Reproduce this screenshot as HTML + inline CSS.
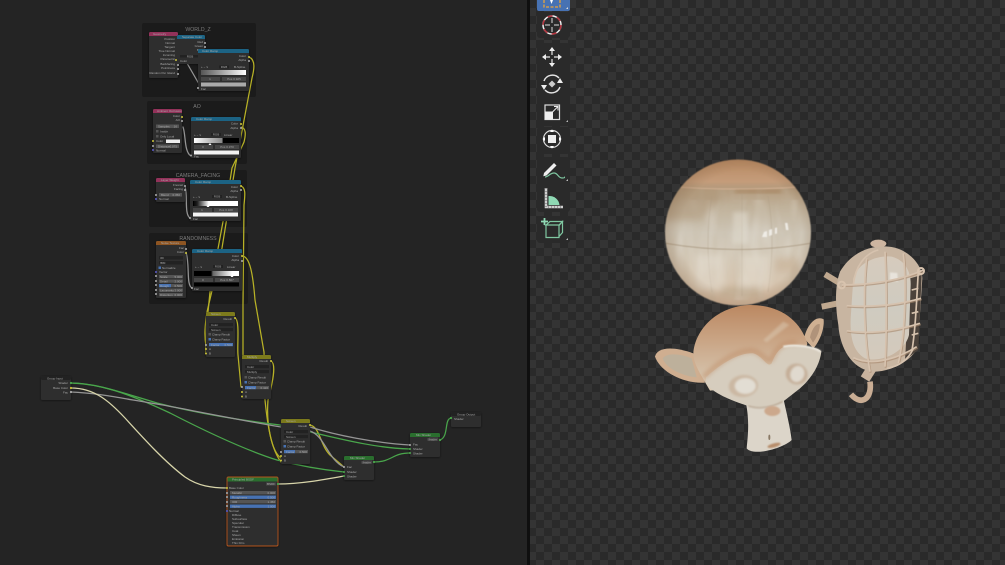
<!DOCTYPE html>
<html><head><meta charset="utf-8"><title>Shader Nodes</title>
<style>
html,body{margin:0;padding:0;background:#232323;width:1005px;height:565px;overflow:hidden}
svg{display:block}
text{font-family:"Liberation Sans",sans-serif}
.t{font-size:3px;fill:#a8a8a8}
.r{text-anchor:end}
.c{text-anchor:middle}
.f{font-size:5.200px;fill:#7c7c7c;text-anchor:middle}
.b{fill:#2f2f2f}
.w{fill:none;stroke-width:1.250;stroke-linecap:round}
.y{stroke:#b8b226}
.g{stroke:#4aa64c}
.a{stroke:#959595}
.m{stroke:#d8d5aa}
.ic{fill:none;stroke:#e4e4e4;stroke-width:1.500}
.cg{fill:none;stroke:#d6c2ae;stroke-width:5}
.cd{fill:none;stroke:#a98a70;stroke-width:6;opacity:.65}
</style></head><body>
<svg width="1005" height="565" viewBox="0 0 1005 565" xmlns="http://www.w3.org/2000/svg">
<defs>
<pattern id="chk" width="16" height="16" patternUnits="userSpaceOnUse"><rect width="16" height="16" fill="#343434"/><rect width="8" height="8" fill="#2a2a2a"/><rect x="8" y="8" width="8" height="8" fill="#2a2a2a"/></pattern>
<linearGradient id="ramp1"><stop offset="0" stop-color="#555"/><stop offset="1" stop-color="#fff"/></linearGradient>
<linearGradient id="ramp2"><stop offset="0" stop-color="#fff"/><stop offset=".62" stop-color="#888"/><stop offset=".65" stop-color="#000"/></linearGradient>
<linearGradient id="ramp3"><stop offset="0" stop-color="#000"/><stop offset=".1" stop-color="#222"/><stop offset=".35" stop-color="#fff"/><stop offset="1" stop-color="#fff"/></linearGradient>
<linearGradient id="ramp4"><stop offset=".38" stop-color="#000"/><stop offset=".42" stop-color="#666"/><stop offset=".85" stop-color="#fff"/></linearGradient>
<linearGradient id="sph" x1="0" y1="0" x2="0" y2="1"><stop offset="0" stop-color="#b98a63"/><stop offset=".15" stop-color="#c49c7a"/><stop offset=".2" stop-color="#b39a7c"/><stop offset=".32" stop-color="#c0b19a"/><stop offset=".5" stop-color="#cfc7b8"/><stop offset=".65" stop-color="#d4cab9"/><stop offset=".82" stop-color="#d6c6b1"/><stop offset="1" stop-color="#d4b99f"/></linearGradient>
<radialGradient id="sphE" cx=".52" cy=".5" r=".52"><stop offset=".8" stop-color="#7a5a3c" stop-opacity="0"/><stop offset="1" stop-color="#7a5a3c" stop-opacity=".28"/></radialGradient>
<linearGradient id="head" x1="0" y1="0" x2="0" y2="1"><stop offset="0" stop-color="#bb8861"/><stop offset=".4" stop-color="#c9a484"/><stop offset=".8" stop-color="#d4c0a8"/><stop offset="1" stop-color="#dacbb6"/></linearGradient>
<linearGradient id="glass" x1="0" y1="0" x2="0" y2="1"><stop offset="0" stop-color="#d6cbbd"/><stop offset=".5" stop-color="#cfcbc0"/><stop offset="1" stop-color="#d4cabc"/></linearGradient>
<filter id="s" x="-10%" y="-10%" width="120%" height="120%"><feGaussianBlur stdDeviation=".35"/></filter>
<filter id="nd" x="-15%" y="-15%" width="130%" height="130%"><feGaussianBlur stdDeviation=".3" result="b"/><feDropShadow dx="0" dy=".6" stdDeviation="1" flood-color="#000" flood-opacity=".55" in="b"/></filter>
<filter id="o" x="-5%" y="-5%" width="110%" height="110%"><feGaussianBlur stdDeviation=".5"/></filter>
<filter id="mb" x="-30%" y="-30%" width="160%" height="160%"><feGaussianBlur stdDeviation="2"/></filter>
<filter id="lb" x="-40%" y="-40%" width="180%" height="180%"><feGaussianBlur stdDeviation="3.500"/></filter>
<filter id="hb" x="-40%" y="-40%" width="180%" height="180%"><feGaussianBlur stdDeviation="7"/></filter>
<filter id="streak" x="0" y="0" width="100%" height="100%"><feTurbulence type="fractalNoise" baseFrequency=".09 .012" numOctaves="2" seed="4"/><feColorMatrix type="matrix" values="0 0 0 0 .55  0 0 0 0 .47  0 0 0 0 .35  2.200 0 0 0 -1"/></filter>
<filter id="streakw" x="0" y="0" width="100%" height="100%"><feTurbulence type="fractalNoise" baseFrequency=".06 .02" numOctaves="2" seed="11"/><feColorMatrix type="matrix" values="0 0 0 0 .93  0 0 0 0 .91  0 0 0 0 .87  2.200 0 0 0 -1"/></filter>
<clipPath id="sc"><circle cx="738" cy="232.500" r="73"/></clipPath>
</defs>

<rect width="528" height="565" fill="#242424"/>

<!-- Frames -->
<rect x="142" y="23" width="114" height="74" rx="2" fill="#1b1b1b"/>
<rect x="147" y="101" width="100" height="63" rx="2" fill="#1b1b1b"/>
<rect x="149" y="170" width="98" height="57" rx="2" fill="#1b1b1b"/>
<rect x="149" y="233" width="99" height="71" rx="2" fill="#1b1b1b"/>
<text x="198" y="31" class="f">WORLD_Z</text>
<text x="197" y="108" class="f">AO</text>
<text x="198" y="177" class="f">CAMERA_FACING</text>
<text x="198" y="240" class="f">RANDOMNESS</text>

<!-- Wires -->
<g class="w" filter="url(#s)">
<path class="y" d="M249 57C256 60 254 70 252 78L235 168L222 248L207 312C205 325 204 335 206 346"/>
<path class="y" d="M241 127C246 128 246 134 244 142L232 168L227 200L210 292L208 312C206 325 206 340 206 352"/>
<path class="y" d="M241 186C246 188 245 195 244 205L243 305L243 385"/>
<path class="y" d="M242 256C250 256 253 275 255 300L264 352L265 400C268 430 272 450 281 462"/>
<path class="y" d="M235 318C240 320 237 345 238 355L241 387"/>
<path class="y" d="M271 361C277 364 272 385 268 400C266 425 272 452 281 458"/>
<path class="y" d="M310 425C320 427 320 445 330 455L344 467"/>
<path class="g" d="M71 383C95 383 120 392 157 403C200 414 240 420 280 425C330 436 370 448 410 449"/>
<path class="g" d="M71 383C100 384 125 392 170 413C205 431 245 450 277 460C300 466 325 470 344 472"/>
<path class="a" d="M71 392C100 393 130 400 163 405C205 413 245 421 281 427"/>
<path class="a" d="M310 427C335 435 375 443 410 445"/>
<path class="a" d="M310 431C325 436 328 460 344 467"/>
<path class="m" d="M71 388C95 388 110 402 125 418C145 440 165 462 185 477C198 486 212 488 227 488"/>
<path class="m" d="M278 484C300 484 322 480 344 476"/>
<path class="g" d="M374 462C392 462 392 453 410 453"/>
<path class="g" d="M440 440C449 437 444 419 451 418"/>
<path class="a" d="M176 44L199 84"/>
<path class="a" d="M183 127C186 135 184 152 191 156"/>
<path class="a" d="M185 187C188 195 184 214 190 218"/>
<path class="a" d="M186 252C190 265 186 285 192 288"/>
</g>

<g filter="url(#nd)">
<!-- Geometry -->
<rect x="149" y="32" width="29" height="46" rx="1.500" class="b"/><path d="M149 36V33.500a1.500 1.500 0 0 1 1.500-1.500h26a1.500 1.500 0 0 1 1.500 1.500V36z" fill="#93305a"/>
<text x="153" y="35" class="t">Geometry</text>
<text x="175" y="40" class="t r">Position</text><text x="175" y="44" class="t r">Normal</text><text x="175" y="48" class="t r">Tangent</text><text x="175" y="52" class="t r">True Normal</text><text x="175" y="56" class="t r">Incoming</text><text x="175" y="60" class="t r">Parametric</text><text x="175" y="65" class="t r">Backfacing</text><text x="175" y="69" class="t r">Pointiness</text><text x="175" y="74" class="t r">Random Per Island</text>
<circle cx="176" cy="60" r="1" fill="#c9c23a"/><circle cx="178" cy="65" r="1" fill="#aaa"/><circle cx="178" cy="69" r="1" fill="#aaa"/><circle cx="178" cy="74" r="1" fill="#aaa"/>
<!-- Separate -->
<rect x="177" y="35" width="28" height="29" rx="1.500" class="b"/><path d="M177 39V36.500a1.500 1.500 0 0 1 1.500-1.500h25a1.500 1.500 0 0 1 1.500 1.500V39z" fill="#1c6484"/>
<text x="182" y="38" class="t">Separate Color</text>
<text x="203" y="43" class="t r">Red</text><text x="203" y="47" class="t r">Green</text><text x="203" y="51" class="t r">Blue</text>
<rect x="180" y="55" width="20" height="2.500" fill="#222"/><text x="190" y="57.500" class="t c">RGB</text><text x="180" y="62" class="t">Color</text>
<circle cx="205" cy="43" r="1" fill="#aaa"/><circle cx="205" cy="47" r="1" fill="#aaa"/><circle cx="205" cy="51" r="1" fill="#aaa"/>
<!-- Ramp world -->
<rect x="198" y="49" width="51" height="42" rx="1.500" class="b"/><path d="M198 53V50.500a1.500 1.500 0 0 1 1.500-1.500h48a1.500 1.500 0 0 1 1.500 1.500V53z" fill="#1c6484"/>
<text x="202" y="52" class="t">Color Ramp</text>
<text x="246" y="57" class="t r">Color</text><text x="246" y="61" class="t r">Alpha</text>
<text x="201" y="68" class="t">+  −  ∨</text><rect x="219" y="65.500" width="10" height="3" fill="#222"/><text x="224" y="68" class="t c">RGB</text><text x="234" y="68" class="t">B-Spline</text>
<rect x="201" y="70" width="45" height="5" fill="url(#ramp1)"/>
<rect x="201" y="77" width="19" height="4" fill="#444"/><rect x="222" y="77" width="24" height="4" fill="#444"/><text x="210" y="80" class="t c">1</text><text x="234" y="80" class="t c">Pos  0.925</text>
<rect x="201" y="82.500" width="45" height="4" fill="#aaa"/><text x="201" y="90" class="t">Fac</text>
<circle cx="249" cy="57" r="1" fill="#c9c23a"/><circle cx="249" cy="61" r="1" fill="#aaa"/><circle cx="198" cy="88" r="1" fill="#aaa"/>
<!-- AO -->
<rect x="153" y="109" width="29" height="44" rx="1.500" class="b"/><path d="M153 113V110.500a1.500 1.500 0 0 1 1.500-1.500h26a1.500 1.500 0 0 1 1.500 1.500V113z" fill="#93305a"/>
<text x="157" y="112" class="t">Ambient Occlusion</text>
<text x="180" y="117" class="t r">Color</text><text x="180" y="121" class="t r">AO</text>
<rect x="156" y="124.500" width="23" height="3.500" fill="#555"/><text x="158" y="127.500" class="t">Samples</text><text x="177" y="127.500" class="t r">16</text>
<rect x="156" y="130" width="2.500" height="2.500" fill="#555"/><text x="160" y="132.500" class="t">Inside</text>
<rect x="156" y="135" width="2.500" height="2.500" fill="#555"/><text x="160" y="137.500" class="t">Only Local</text>
<text x="156" y="142" class="t">Color</text><rect x="166" y="139.500" width="14" height="3.500" fill="#eee"/>
<rect x="156" y="144.500" width="23" height="3.500" fill="#555"/><text x="158" y="147.500" class="t">Distance</text><text x="177" y="147.500" class="t r">0.075</text><text x="156" y="151.500" class="t">Normal</text>
<circle cx="182" cy="117" r="1" fill="#c9c23a"/><circle cx="182" cy="121" r="1" fill="#aaa"/><circle cx="153" cy="141" r="1" fill="#c9c23a"/><circle cx="153" cy="146" r="1" fill="#aaa"/><circle cx="153" cy="150" r="1" fill="#5a5ac8"/>
<!-- Ramp AO -->
<rect x="191" y="117" width="50" height="41" rx="1.500" class="b"/><path d="M191 121V118.500a1.500 1.500 0 0 1 1.500-1.500h47a1.500 1.500 0 0 1 1.500 1.500V121z" fill="#1c6484"/>
<text x="196" y="120" class="t">Color Ramp</text>
<text x="238" y="124.500" class="t r">Color</text><text x="238" y="129" class="t r">Alpha</text>
<text x="194" y="136" class="t">+  −  ∨</text><rect x="211" y="133" width="10" height="3" fill="#222"/><text x="216" y="135.500" class="t c">RGB</text><text x="224" y="136" class="t">Linear</text>
<rect x="194" y="138" width="45" height="5" fill="url(#ramp2)"/><path d="M210 143l1.500 2h-3z" fill="#fff"/>
<rect x="194" y="145" width="19" height="4" fill="#444"/><rect x="215" y="145" width="24" height="4" fill="#444"/><text x="203" y="148" class="t c">0</text><text x="227" y="148" class="t c">Pos  0.370</text>
<rect x="194" y="150.500" width="45" height="4" fill="#f2f2f2"/><text x="194" y="157.500" class="t">Fac</text>
<circle cx="241" cy="124" r="1" fill="#c9c23a"/><circle cx="241" cy="128" r="1" fill="#aaa"/><circle cx="191" cy="155.500" r="1" fill="#aaa"/>
<!-- Layer Weight -->
<rect x="156" y="178" width="29" height="24" rx="1.500" class="b"/><path d="M156 182V179.500a1.500 1.500 0 0 1 1.500-1.500h26a1.500 1.500 0 0 1 1.500 1.500V182z" fill="#93305a"/>
<text x="161" y="181" class="t">Layer Weight</text><text x="183" y="186" class="t r">Fresnel</text><text x="183" y="190" class="t r">Facing</text>
<rect x="159" y="193" width="23" height="3.500" fill="#555"/><text x="161" y="196" class="t">Blend</text><text x="180" y="196" class="t r">0.350</text><text x="159" y="200" class="t">Normal</text>
<circle cx="185" cy="186" r="1" fill="#aaa"/><circle cx="185" cy="190" r="1" fill="#aaa"/><circle cx="156" cy="195" r="1" fill="#aaa"/><circle cx="156" cy="199" r="1" fill="#5a5ac8"/>
<!-- Ramp cam -->
<rect x="190" y="180" width="51" height="41" rx="1.500" class="b"/><path d="M190 184V181.500a1.500 1.500 0 0 1 1.500-1.500h48a1.500 1.500 0 0 1 1.500 1.500V184z" fill="#1c6484"/>
<text x="195" y="183" class="t">Color Ramp</text><text x="238" y="188" class="t r">Color</text><text x="238" y="192" class="t r">Alpha</text>
<text x="193" y="198" class="t">+  −  ∨</text><rect x="212" y="195" width="10" height="3" fill="#222"/><text x="217" y="197.500" class="t c">RGB</text><text x="226" y="198" class="t">B-Spline</text>
<rect x="193" y="201" width="45" height="5" fill="url(#ramp3)"/><path d="M208 205l1.500 2h-3z" fill="#fff"/>
<rect x="193" y="208" width="19" height="4" fill="#444"/><rect x="214" y="208" width="24" height="4" fill="#444"/><text x="202" y="211" class="t c">1</text><text x="226" y="211" class="t c">Pos  0.328</text>
<rect x="193" y="212.500" width="45" height="4" fill="#f4f4f4"/><text x="193" y="220" class="t">Fac</text>
<circle cx="241" cy="186" r="1" fill="#c9c23a"/><circle cx="241" cy="190" r="1" fill="#aaa"/><circle cx="190" cy="218" r="1" fill="#aaa"/>
<!-- Noise -->
<rect x="156" y="241" width="30" height="57" rx="1.500" class="b"/><path d="M156 245V242.500a1.500 1.500 0 0 1 1.500-1.500h27a1.500 1.500 0 0 1 1.500 1.500V245z" fill="#8e5422"/>
<text x="161" y="244" class="t">Noise Texture</text><text x="184" y="249" class="t r">Fac</text><text x="184" y="253" class="t r">Color</text>
<rect x="159" y="256" width="24" height="3.500" fill="#222"/><text x="160" y="259" class="t">3D</text><rect x="159" y="261" width="24" height="3.500" fill="#222"/><text x="160" y="264" class="t">fBM</text>
<rect x="158.500" y="266.500" width="2.500" height="2.500" fill="#4772b3"/><text x="162" y="269" class="t">Normalize</text><text x="159" y="273" class="t">Vector</text>
<rect x="159" y="275" width="24" height="3.200" fill="#555"/><text x="160" y="278" class="t">Scale</text><text x="182" y="278" class="t r">5.000</text>
<rect x="159" y="279.500" width="24" height="3.200" fill="#555"/><text x="160" y="282.500" class="t">Detail</text><text x="182" y="282.500" class="t r">2.000</text>
<rect x="159" y="284" width="24" height="3.200" fill="#555"/><rect x="159" y="284" width="12" height="3.200" fill="#4772b3"/><text x="160" y="287" class="t">Rough</text><text x="182" y="287" class="t r">0.500</text>
<rect x="159" y="288.500" width="24" height="3.200" fill="#555"/><text x="160" y="291.500" class="t">Lacunarity</text><text x="182" y="291.500" class="t r">2.000</text>
<rect x="159" y="293" width="24" height="3.200" fill="#555"/><text x="160" y="296" class="t">Distortion</text><text x="182" y="296" class="t r">0.000</text>
<circle cx="186" cy="249" r="1" fill="#aaa"/><circle cx="186" cy="253" r="1" fill="#c9c23a"/><circle cx="156" cy="272" r="1" fill="#5a5ac8"/><circle cx="156" cy="276" r="1" fill="#aaa"/><circle cx="156" cy="281" r="1" fill="#aaa"/><circle cx="156" cy="285" r="1" fill="#aaa"/><circle cx="156" cy="290" r="1" fill="#aaa"/><circle cx="156" cy="294" r="1" fill="#aaa"/>
<!-- Ramp rand -->
<rect x="192" y="249" width="50" height="42" rx="1.500" class="b"/><path d="M192 253V250.500a1.500 1.500 0 0 1 1.500-1.500h47a1.500 1.500 0 0 1 1.500 1.500V253z" fill="#1c6484"/>
<text x="197" y="252" class="t">Color Ramp</text><text x="239" y="257" class="t r">Color</text><text x="239" y="261" class="t r">Alpha</text>
<text x="195" y="268" class="t">+  −  ∨</text><rect x="213" y="265" width="10" height="3" fill="#222"/><text x="218" y="267.500" class="t c">RGB</text><text x="227" y="268" class="t">Linear</text>
<rect x="194" y="271" width="45" height="5" fill="url(#ramp4)"/><path d="M232 275l1.500 2h-3z" fill="#fff"/>
<rect x="194" y="278" width="19" height="4" fill="#444"/><rect x="215" y="278" width="24" height="4" fill="#444"/><text x="203" y="281" class="t c">0</text><text x="227" y="281" class="t c">Pos  0.867</text>
<rect x="194" y="282.500" width="45" height="4" fill="#050505"/><text x="194" y="290" class="t">Fac</text>
<circle cx="242" cy="256" r="1" fill="#c9c23a"/><circle cx="242" cy="261" r="1" fill="#aaa"/><circle cx="192" cy="288" r="1" fill="#aaa"/>
<!-- Screen 1 -->
<rect x="206" y="312" width="29" height="45" rx="1.500" class="b"/><path d="M206 316V313.500a1.500 1.500 0 0 1 1.500-1.500h26a1.500 1.500 0 0 1 1.500 1.500V316z" fill="#7c7a1c"/>
<text x="211" y="315" class="t">Screen</text><text x="232" y="320" class="t r">Result</text>
<rect x="209" y="323" width="24" height="3.200" fill="#222"/><text x="211" y="326" class="t">Color</text><rect x="209" y="328" width="24" height="3.200" fill="#222"/><text x="211" y="331" class="t">Screen</text>
<rect x="208.500" y="333" width="2.500" height="2.500" fill="#555"/><text x="212" y="335.500" class="t">Clamp Result</text><rect x="208.500" y="338" width="2.500" height="2.500" fill="#4772b3"/><text x="212" y="340.500" class="t">Clamp Factor</text>
<rect x="209" y="343" width="24" height="3.200" fill="#4772b3"/><text x="211" y="346" class="t">Factor</text><text x="232" y="346" class="t r">0.500</text>
<text x="209" y="350" class="t">A</text><text x="209" y="354.500" class="t">B</text>
<circle cx="235" cy="318" r="1" fill="#c9c23a"/><circle cx="206" cy="345" r="1" fill="#aaa"/><circle cx="206" cy="349" r="1" fill="#c9c23a"/><circle cx="206" cy="353.500" r="1" fill="#c9c23a"/>
<!-- Multiply -->
<rect x="242" y="355" width="29" height="44" rx="1.500" class="b"/><path d="M242 359V356.500a1.500 1.500 0 0 1 1.500-1.500h26a1.500 1.500 0 0 1 1.500 1.500V359z" fill="#7c7a1c"/>
<text x="247" y="358" class="t">Multiply</text><text x="268" y="362" class="t r">Result</text>
<rect x="245" y="365" width="24" height="3.200" fill="#222"/><text x="247" y="368" class="t">Color</text><rect x="245" y="370" width="24" height="3.200" fill="#222"/><text x="247" y="373" class="t">Multiply</text>
<rect x="244.500" y="376" width="2.500" height="2.500" fill="#555"/><text x="248" y="378.500" class="t">Clamp Result</text><rect x="244.500" y="381" width="2.500" height="2.500" fill="#4772b3"/><text x="248" y="383.500" class="t">Clamp Factor</text>
<rect x="245" y="386" width="24" height="3.200" fill="#555"/><rect x="245" y="386" width="11" height="3.200" fill="#4772b3"/><text x="247" y="389" class="t">Factor</text><text x="268" y="389" class="t r">0.420</text>
<text x="245" y="393" class="t">A</text><text x="245" y="397.500" class="t">B</text>
<circle cx="271" cy="361" r="1" fill="#c9c23a"/><circle cx="242" cy="387" r="1" fill="#aaa"/><circle cx="242" cy="392" r="1" fill="#c9c23a"/><circle cx="242" cy="396.500" r="1" fill="#c9c23a"/>
<!-- Screen 2 -->
<rect x="281" y="419" width="29" height="45" rx="1.500" class="b"/><path d="M281 423V420.500a1.500 1.500 0 0 1 1.500-1.500h26a1.500 1.500 0 0 1 1.500 1.500V423z" fill="#7c7a1c"/>
<text x="286" y="422" class="t">Screen</text><text x="307" y="427" class="t r">Result</text>
<rect x="284" y="430" width="24" height="3.200" fill="#222"/><text x="286" y="433" class="t">Color</text><rect x="284" y="435" width="24" height="3.200" fill="#222"/><text x="286" y="438" class="t">Screen</text>
<rect x="283.500" y="440" width="2.500" height="2.500" fill="#555"/><text x="287" y="442.500" class="t">Clamp Result</text><rect x="283.500" y="445" width="2.500" height="2.500" fill="#4772b3"/><text x="287" y="447.500" class="t">Clamp Factor</text>
<rect x="284" y="450" width="24" height="3.200" fill="#555"/><rect x="284" y="450" width="11" height="3.200" fill="#4772b3"/><text x="286" y="453" class="t">Factor</text><text x="307" y="453" class="t r">0.500</text>
<text x="284" y="457" class="t">A</text><text x="284" y="461.500" class="t">B</text>
<circle cx="310" cy="425" r="1" fill="#c9c23a"/><circle cx="281" cy="452" r="1" fill="#aaa"/><circle cx="281" cy="456" r="1" fill="#c9c23a"/><circle cx="281" cy="460.500" r="1" fill="#c9c23a"/>
<!-- Group input -->
<rect x="41" y="376" width="30" height="24" rx="1.500" class="b"/><rect x="41" y="376" width="30" height="4" rx="1.500" fill="#202020"/>
<text x="47" y="379.500" class="t">Group Input</text><text x="68" y="384" class="t r">Shader</text><text x="68" y="389" class="t r">Base Color</text><text x="68" y="393.500" class="t r">Fac</text>
<circle cx="71" cy="383" r="1.100" fill="#4aa64c"/><circle cx="71" cy="388" r="1.100" fill="#c9c23a"/><circle cx="71" cy="392" r="1.100" fill="#aaa"/>
<!-- Principled -->
<rect x="227" y="477" width="51" height="69" rx="1.500" fill="#2f2f2f" stroke="#b5541c" stroke-width=".9"/><rect x="227.500" y="477.500" width="50" height="4" fill="#2b6e2f"/>
<text x="232" y="480.500" class="t">Principled BSDF</text>
<rect x="266" y="482.500" width="10" height="3" fill="#444"/><text x="275" y="485" class="t r">BSDF</text><text x="229" y="489" class="t">Base Color</text>
<rect x="230" y="491" width="46" height="3.400" fill="#555"/><text x="232" y="494" class="t">Metallic</text><text x="275" y="494" class="t r">0.000</text>
<rect x="230" y="495.500" width="46" height="3.400" fill="#4772b3"/><text x="232" y="498.500" class="t">Roughness</text><text x="275" y="498.500" class="t r">0.500</text>
<rect x="230" y="500" width="46" height="3.400" fill="#555"/><text x="232" y="503" class="t">IOR</text><text x="275" y="503" class="t r">1.450</text>
<rect x="230" y="504.500" width="46" height="3.400" fill="#4772b3"/><text x="232" y="507.500" class="t">Alpha</text><text x="275" y="507.500" class="t r">1.000</text>
<text x="229" y="512" class="t">Normal</text>
<text x="232" y="516" class="t">Diffuse</text><text x="232" y="520" class="t">Subsurface</text><text x="232" y="524" class="t">Specular</text><text x="232" y="528" class="t">Transmission</text><text x="232" y="532" class="t">Coat</text><text x="232" y="536" class="t">Sheen</text><text x="232" y="540" class="t">Emission</text><text x="232" y="544" class="t">Thin Film</text>
<circle cx="278" cy="484" r="1.100" fill="#4aa64c"/><circle cx="227" cy="488" r="1" fill="#c9c23a"/><circle cx="227" cy="493" r="1" fill="#aaa"/><circle cx="227" cy="497" r="1" fill="#aaa"/><circle cx="227" cy="502" r="1" fill="#aaa"/><circle cx="227" cy="506" r="1" fill="#aaa"/><circle cx="227" cy="511" r="1" fill="#5a5ac8"/>
<!-- Mix Shader 1 -->
<rect x="344" y="456" width="30" height="24" rx="1.500" class="b"/><path d="M344 460V457.500a1.500 1.500 0 0 1 1.500-1.500h27a1.500 1.500 0 0 1 1.500 1.500V460z" fill="#2b6e2f"/>
<text x="350" y="459" class="t">Mix Shader</text><rect x="363" y="460.500" width="9" height="3.400" fill="#444"/><text x="371" y="463.500" class="t r">Shader</text><text x="347" y="468" class="t">Fac</text><text x="347" y="473" class="t">Shader</text><text x="347" y="477.500" class="t">Shader</text>
<circle cx="374" cy="462" r="1.100" fill="#4aa64c"/><circle cx="344" cy="467" r="1" fill="#aaa"/><circle cx="344" cy="472" r="1" fill="#4aa64c"/><circle cx="344" cy="476" r="1" fill="#4aa64c"/>
<!-- Mix Shader 2 -->
<rect x="410" y="433" width="30" height="24" rx="1.500" class="b"/><path d="M410 437V434.500a1.500 1.500 0 0 1 1.500-1.500h27a1.500 1.500 0 0 1 1.500 1.500V437z" fill="#2b6e2f"/>
<text x="416" y="436" class="t">Mix Shader</text><rect x="429" y="437.500" width="9" height="3.400" fill="#444"/><text x="437" y="440.500" class="t r">Shader</text><text x="413" y="445.500" class="t">Fac</text><text x="413" y="450" class="t">Shader</text><text x="413" y="454.500" class="t">Shader</text>
<circle cx="440" cy="440" r="1.100" fill="#4aa64c"/><circle cx="410" cy="445" r="1" fill="#aaa"/><circle cx="410" cy="449" r="1" fill="#4aa64c"/><circle cx="410" cy="453" r="1" fill="#4aa64c"/>
<!-- Group output -->
<rect x="451" y="412" width="30" height="15" rx="1.500" class="b"/><rect x="451" y="412" width="30" height="4" rx="1.500" fill="#202020"/>
<text x="457" y="415.500" class="t">Group Output</text><text x="454" y="420" class="t">Shader</text><circle cx="451" cy="418" r="1.100" fill="#4aa64c"/>
</g>

<!-- Divider + viewport -->
<rect x="527" y="0" width="3" height="565" fill="#0f0f0f"/>
<rect x="530" y="0" width="475" height="565" fill="url(#chk)"/>

<!-- Toolbar -->
<g filter="url(#s)">
<rect x="537" y="-4" width="33" height="15" rx="2" fill="#4772b3"/>
<path d="M544 0v7h16V0" fill="none" stroke="#e8a33a" stroke-width="1.300" stroke-dasharray="3 1.500"/><path d="M550 0h3l-1.500 4z" fill="#fff"/><path d="M566 9h2V7z" fill="#ddd"/>
<rect x="537" y="12" width="33" height="26" rx="3" fill="#2a2a2a"/>
<rect x="537" y="43" width="33" height="83" rx="3" fill="#2a2a2a"/>
<rect x="537" y="127" width="33" height="27" rx="3" fill="#2a2a2a"/>
<rect x="537" y="157" width="33" height="55" rx="3" fill="#2a2a2a"/>
<rect x="537" y="216" width="33" height="27" rx="3" fill="#2a2a2a"/>
<circle cx="552" cy="25" r="9" fill="none" stroke="#eee" stroke-width="1.500"/>
<circle cx="552" cy="25" r="9" fill="none" stroke="#b5303c" stroke-width="1.500" stroke-dasharray="5 4.420"/>
<path d="M552 18v5M552 27v5M545 25h5M554 25h5" stroke="#ddd" stroke-width="1" fill="none"/>
<path d="M552 51v4M552 59v4M546 57h4M554 57h4" stroke="#e8e8e8" stroke-width="1.200"/>
<path d="M552 47l3 4h-6zM552 67l3-4h-6zM542 57l4-3v6zM562 57l-4-3v6z" fill="#eee"/>
<path d="M544 81a9 9 0 0 1 15-3M560 87a9 9 0 0 1-15 3" class="ic"/>
<path d="M560 78l3 5h-6zM544 90l-3-5h6z" fill="#eee"/>
<rect x="549.500" y="81.500" width="5" height="5" transform="rotate(45 552 84)" fill="#ccc"/>
<rect x="545" y="105" width="14.500" height="14.500" fill="none" stroke="#ddd" stroke-width="1.200"/>
<rect x="545" y="111.500" width="8" height="8" fill="#eee"/>
<path d="M552.500 112l5-5M554 106.500h4v4" fill="none" stroke="#eee" stroke-width="1"/>
<path d="M566 122h2v-2z" fill="#bbb"/>
<circle cx="552" cy="139" r="8.500" fill="none" stroke="#ddd" stroke-width="1.200"/>
<rect x="548" y="135" width="8" height="8" fill="#eee"/>
<path d="M552 129.500l2 2.500h-4zM552 148.500l2-2.500h-4zM542.500 139l2.500-2v4zM561.500 139l-2.500-2v4z" fill="#fff"/>
<path d="M544 173l10-10 2.500 2.500-10 10-3.200.8z" fill="#eee"/>
<path d="M545 177c3 0 5-4 9-4s4 5 8 5 2-1 3-1" fill="none" stroke="#7fc7a1" stroke-width="1.200"/>
<path d="M566 181h2v-2z" fill="#bbb"/>
<path d="M546 188v19h17" fill="none" stroke="#cfcfcf" stroke-width="2.600"/>
<path d="M548.500 196a10 10 0 0 1 11 9h-11z" fill="#8fd9b4"/>
<path d="M546 188v19h17" fill="none" stroke="#777" stroke-width="2.600" stroke-dasharray=".6 2.400"/>
<path d="M546 225l4-3.500h12.500l-3 3.500zM546 225h13v12.500h-13zM559 225l3.500-3.500v11l-3.500 4" fill="none" stroke="#7fc7a1" stroke-width="1.200"/>
<path d="M544.500 218v7M541 221.500h7" stroke="#8fd9b4" stroke-width="1.800"/>
<path d="M566 240h2v-2z" fill="#bbb"/>
</g>

<!-- Sphere -->
<g filter="url(#o)">
<circle cx="738" cy="232.500" r="73" fill="url(#sph)"/>
<g clip-path="url(#sc)">
<rect x="665" y="188" width="146" height="118" filter="url(#streak)" opacity=".38"/>
<rect x="665" y="200" width="146" height="100" filter="url(#streakw)" opacity=".32"/>
<path d="M664 186Q738 192 812 186" fill="none" stroke="#d4b295" stroke-width="1"/>
<path d="M735 190h46v3h-46z" fill="#a27d55" opacity=".75" filter="url(#mb)"/>
<path d="M664 243Q738 256 812 243" fill="none" stroke="#a8977f" stroke-width=".8"/>
<path d="M664 190Q700 188 725 195L700 220L664 220z" fill="#a88f70" opacity=".4" filter="url(#lb)"/>
<path d="M712 196Q704 240 712 292M742 194V296M768 196Q776 240 768 292" fill="none" stroke="#a8977f" stroke-width=".6" opacity=".5"/>
<rect x="733" y="212" width="15" height="32" fill="#e6e2d8" opacity=".45" filter="url(#mb)"/>
<g filter="url(#lb)" opacity=".45">
<rect x="695" y="255" width="30" height="35" fill="#e7e1d6"/>
<rect x="740" y="255" width="30" height="32" fill="#e9e3d8"/>
<rect x="720" y="287" width="40" height="10" fill="#ae9b7e"/>
<rect x="775" y="258" width="22" height="14" fill="#c4a98c"/>
</g>
<path d="M762 237l2-5 3-1 0 6zM769 236v-6l3-1v6zM775 234v-6l2-.5v6zM785 223l2.500 0 1 7-2.500 0z" fill="#f3f1ec" opacity=".85"/>
</g>
<circle cx="738" cy="232.500" r="73" fill="url(#sphE)"/>
</g>

<!-- Monkey -->
<g transform="translate(650 300) scale(.33333)" filter="url(#o)">
<path d="M15 170C20 145 60 135 130 160L165 248C100 252 30 215 15 170Z" fill="#cfae90"/>
<path d="M38 175C50 158 90 160 125 175L140 232C100 228 50 208 38 175Z" fill="#bdb09b"/>
<path d="M462 115C472 70 500 45 521 58C524 90 506 128 490 145Z" fill="#cfb092"/>
<path d="M480 112C485 88 497 70 509 72C511 92 498 116 489 128Z" fill="#b0937a"/>
<path d="M130 160C135 90 200 18 300 15C390 15 450 60 472 130L440 250L180 272C150 220 130 190 130 160Z" fill="url(#head)"/>
<path d="M340 120l60-55 18 10-68 52z" fill="#dac9b2" opacity=".5" filter="url(#lb)"/>
<path d="M288 310C300 370 292 420 290 445C310 470 400 445 425 420C420 380 410 340 400 295Z" fill="#dcd5c9"/>
<path d="M168 232C220 185 270 158 310 160C340 168 350 205 365 190C380 150 400 130 440 135C480 140 510 145 514 155C510 190 490 230 450 265C425 285 405 300 395 308C360 322 320 325 295 318C240 300 190 280 168 250Z" fill="#d6cdbe"/>
<path d="M160 232C215 178 270 148 310 152C340 160 350 190 365 178C380 142 400 124 440 128" fill="none" stroke="#bf8d67" stroke-width="12" opacity=".65" filter="url(#hb)"/>
<path d="M400 140C440 132 490 140 512 155" fill="none" stroke="#ece7dd" stroke-width="6" filter="url(#mb)"/>
<path d="M295 318C330 330 370 320 398 305" fill="none" stroke="#a8927c" stroke-width="5" opacity=".55" filter="url(#mb)"/>
<ellipse cx="280" cy="258" rx="44" ry="33" fill="#cbb8a3" transform="rotate(-5 280 258)" filter="url(#lb)"/>
<ellipse cx="286" cy="258" rx="32" ry="24" fill="#e2ddd3" filter="url(#lb)"/>
<ellipse cx="440" cy="222" rx="33" ry="31" fill="#c4ae98" transform="rotate(20 440 222)" filter="url(#lb)"/>
<ellipse cx="442" cy="222" rx="21" ry="25" fill="#e0d9ce" transform="rotate(20 442 222)" filter="url(#lb)"/>
<ellipse cx="367" cy="333" rx="24" ry="15" fill="#cca88c" filter="url(#mb)"/>
<ellipse cx="372" cy="436" rx="20" ry="6" fill="#b78d6b" transform="rotate(-15 372 436)" filter="url(#mb)"/>
<ellipse cx="358" cy="412" rx="3" ry="8" fill="#8a7a66"/>
</g>

<!-- Lamp -->
<g transform="translate(815 235) scale(.33333)" filter="url(#o)">
<path d="M30 118L75 145M20 215L70 205" stroke="#bfa88f" stroke-width="18" fill="none"/>
<path d="M170 400L150 432" stroke="#c9b39e" stroke-width="30"/>
<path d="M165 440C172 490 140 515 108 478" fill="none" stroke="#c9ad94" stroke-width="17"/>
<ellipse cx="190" cy="26" rx="24" ry="12" fill="#cdb5a0"/>
<path d="M75 110C110 50 170 30 220 35C280 40 322 90 322 130L308 340C280 385 220 412 170 410C110 400 75 340 70 270C60 210 60 150 75 110Z" fill="#c8b5a1"/>
<path d="M285 130L320 120L310 345L270 375Z" fill="#4c433b"/>
<path d="M115 130C130 80 190 60 230 65C270 75 288 110 287 150L282 300C270 350 200 385 150 370C115 350 105 310 107 250Z" fill="url(#glass)"/>
<path d="M225 112l22 2 2 26-25-2z" fill="#efece5" opacity=".75" filter="url(#mb)"/>
<g transform="translate(2 3)">
<path class="cd" d="M80 150C150 150 250 140 325 105M95 212C170 218 250 210 318 190M95 287C170 300 250 285 315 265M115 368C170 395 250 370 305 335"/>
<path class="cd" d="M155 70C145 150 145 300 165 410M210 50C215 150 215 300 210 395M265 55C275 150 270 300 250 385"/>
</g>
<path class="cg" d="M80 150C150 150 250 140 325 105M95 212C170 218 250 210 318 190M95 287C170 300 250 285 315 265M115 368C170 395 250 370 305 335"/>
<path class="cg" d="M115 150C120 95 150 55 190 45M155 70C145 150 145 300 165 410M210 50C215 150 215 300 210 395M265 55C275 150 270 300 250 385M310 105C305 200 300 300 290 350"/>
<path class="cg" d="M290 165l20-5M290 235l20-5M290 300l20-5M215 400C250 395 280 375 295 340"/>
<circle cx="80" cy="150" r="10" fill="none" stroke="#d8c3ae" stroke-width="6"/>
<circle cx="318" cy="108" r="9" fill="none" stroke="#d8c3ae" stroke-width="6"/>
</g>
</svg>
</body></html>
